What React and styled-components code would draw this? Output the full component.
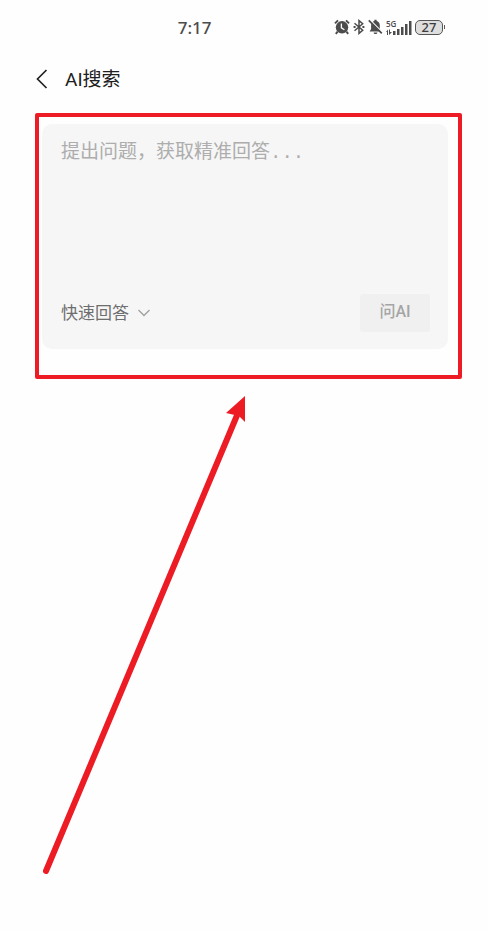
import React from "react";
import styled, { createGlobalStyle } from "styled-components";

const GlobalStyle = createGlobalStyle`
  * { box-sizing: border-box; }
  body {
    margin: 0;
    background: #fefefe;
    font-family: "Noto Sans", "Noto Sans CJK SC", sans-serif;
  }
`;

const Screen = styled.main`
  min-height: 100vh;
  display: flex;
  flex-direction: column;
`;

const StatusBar = styled.div`
  display: grid;
  grid-template-columns: 2fr auto 3fr;
  align-items: center;
  height: 54px;
  padding: 0 43px 0 22px;
  color: #4c4c4c;
`;

const Clock = styled.time`
  grid-column: 2;
  padding-top: 1px;
  font: 500 17px/24px "Noto Sans", sans-serif;
`;

const StatusIcons = styled.div`
  display: flex;
  justify-content: flex-end;
  align-items: center;
  gap: 3px;
`;

const Icon = styled.svg`
  display: block;
  flex: none;
`;

const Network = styled.div`
  display: grid;
  grid-template-columns: 8px 18px;
  grid-template-rows: 8px 7px;
`;

const NetworkLabel = styled.span`
  grid-column: 1;
  grid-row: 1;
  font: 600 8px/8px "Open Sans", sans-serif;
`;

const SignalBars = styled(Icon)`
  grid-column: 1 / 3;
  grid-row: 1 / 3;
`;

const Battery = styled.div`
  display: flex;
  align-items: center;

  &::after {
    content: "";
    width: 1px;
    height: 4px;
    margin-left: 1px;
    background: #5c5c5c;
  }
`;

const BatteryLevel = styled.span`
  width: 28px;
  height: 15px;
  border: 1px solid #555;
  border-radius: 5px;
  background: #dedede;
  color: #3c3c3c;
  font: 500 13px/13px "Noto Sans", sans-serif;
  text-align: center;
`;

const Header = styled.header`
  display: flex;
  align-items: center;
  height: 50px;
  padding: 0 34px;
  gap: 15px;
`;

const BackButton = styled.button`
  display: flex;
  padding: 0;
  border: 0;
  background: none;
  color: #222;
`;

const Title = styled.h1`
  margin: 0;
  padding-top: 2px;
  color: #202020;
  font: 400 19px/28px "Roboto", "Noto Sans CJK SC", sans-serif;
`;

const Highlight = styled.section`
  margin: 9px 26px 0 35px;
  padding: 7px 10px 26px 3px;
  border: 4px solid #ed1c24;
  border-radius: 2px;
`;

const QuestionCard = styled.form`
  display: flex;
  flex-direction: column;
  padding: 15px 18px 17px 19px;
  border-radius: 10px;
  background: #f6f6f6;
`;

const Question = styled.textarea`
  display: block;
  width: 100%;
  height: 155px;
  padding: 0;
  border: 0;
  outline: 0;
  resize: none;
  background: transparent;
  color: #333;
  font: 400 19px/28px "Liberation Mono", "Noto Sans CJK SC", monospace;

  &::placeholder { color: #adadad; opacity: 1; }
`;

const Actions = styled.div`
  display: flex;
  align-items: center;
  justify-content: space-between;
`;

const ModePicker = styled.label`
  display: flex;
  align-items: center;
  gap: 8px;
  color: #a0a0a0;
`;

const ModeSelect = styled.select`
  appearance: none;
  padding: 0 0 2px;
  border: 0;
  outline: 0;
  background: transparent;
  color: #6e6e6e;
  font: 400 17px/28px "Noto Sans CJK SC", sans-serif;
`;

const AskButton = styled.button`
  width: 70px;
  height: 38px;
  padding: 0 0 2px;
  border: 0;
  border-radius: 3px;
  background: #f0f0f0;
  color: #a5a5a5;
  font: 500 16px/24px "Roboto", "Noto Sans CJK SC", sans-serif;
`;

const Arrow = styled.svg`
  display: block;
  flex: none;
  margin: 16px 0 0 40px;
`;

function AlarmIcon() {
  return (
    <Icon width="16" height="16" viewBox="0 0 16 16" fill="none" aria-label="Alarm">
      <circle cx="8" cy="8.3" r="6.2" fill="currentColor" />
      <path d="M1 4.4 4 1.4M15 4.4 12 1.4M3.6 12.7 1.8 14.8M12.4 12.7l1.8 2.1" stroke="currentColor" strokeWidth="2" />
      <path d="M7.4 4.6v4.2l3 1.9" stroke="#fefefe" strokeWidth="1.3" />
    </Icon>
  );
}

function BluetoothIcon() {
  return (
    <Icon width="12" height="16" viewBox="0 0 12 16" fill="none" stroke="currentColor" strokeWidth="1.5" aria-label="Bluetooth">
      <path d="M1.5 4.2 9.7 11.2 6 14.4V1.6l3.7 3.2L1.5 11.8" />
      <path d="M.6 8h2M9.4 8h2" strokeWidth="1.9" />
    </Icon>
  );
}

function MutedIcon() {
  return (
    <Icon width="15" height="16" viewBox="0 0 15 16" fill="none" aria-label="Muted">
      <path d="M1.6 12.6 3.1 10V6.4C3.1 4 4.5 2.6 6.4 2.1V.8h2.2v1.3c1.9.5 3.2 1.9 3.2 4.3V10l1.6 2.6zM5.6 13.4h3.8c-.2 2.2-3.6 2.2-3.8 0z" fill="currentColor" />
      <path d="m2.2 1 12.6 12.6" stroke="#fefefe" strokeWidth="1.2" />
      <path d="m.8 1.4 13 13" stroke="currentColor" strokeWidth="1.7" />
    </Icon>
  );
}

function Signal() {
  return (
    <Network>
      <NetworkLabel>5G</NetworkLabel>
      <SignalBars width="26" height="15" viewBox="0 0 26 15" fill="currentColor" aria-label="Signal">
        <path d="M7 11h2.5v4H7zM11 9h2.5v6H11zM15 7h2.5v8H15zM19 4h2.5v11H19zM23 1h2.5v14H23z" />
        <path d="m0 12 2-2.5V15H1v-3zM3 9.5h1V12h2l-3 3z" />
      </SignalBars>
    </Network>
  );
}

export default function App() {
  return (
    <Screen>
      <GlobalStyle />
      <StatusBar>
        <Clock>7:17</Clock>
        <StatusIcons>
          <AlarmIcon />
          <BluetoothIcon />
          <MutedIcon />
          <Signal />
          <Battery>
            <BatteryLevel>27</BatteryLevel>
          </Battery>
        </StatusIcons>
      </StatusBar>
      <Header>
        <BackButton type="button" aria-label="返回">
          <Icon width="16" height="20" viewBox="0 0 16 20" fill="none" stroke="currentColor" strokeWidth="1.7">
            <path d="M12.5 1 3.5 10l9 9" />
          </Icon>
        </BackButton>
        <Title>AI搜索</Title>
      </Header>
      <Highlight>
        <QuestionCard onSubmit={(event) => event.preventDefault()}>
          <Question aria-label="问题" placeholder="提出问题，获取精准回答..." />
          <Actions>
            <ModePicker>
              <ModeSelect aria-label="回答模式">
                <option>快速回答</option>
              </ModeSelect>
              <Icon width="14" height="10" viewBox="0 0 14 10" fill="none" stroke="currentColor" strokeWidth="1.3">
                <path d="m1.5 2 5.5 5.5L12.5 2" />
              </Icon>
            </ModePicker>
            <AskButton type="submit">问AI</AskButton>
          </Actions>
        </QuestionCard>
      </Highlight>
      <Arrow width="212" height="484" viewBox="0 0 212 484" fill="none" aria-hidden="true">
        <path d="M6 476 198 18" stroke="#ed1c24" strokeWidth="6" strokeLinecap="round" />
        <path d="M205 1v26l-6-6-13-3z" fill="#ed1c24" />
      </Arrow>
    </Screen>
  );
}
